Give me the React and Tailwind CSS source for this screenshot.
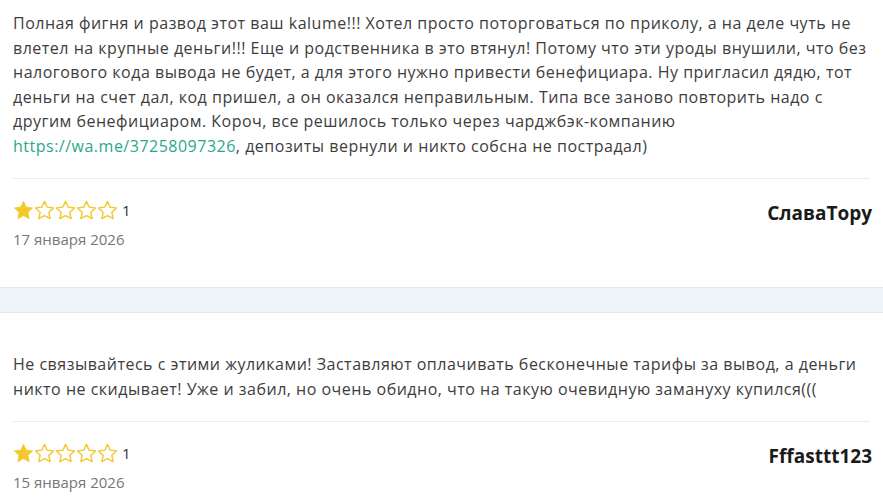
import React from 'react';

function Star({ filled }) {
    return (
        <svg width="21" height="21" viewBox="0 0 24 24" className="shrink-0">
            <path
                d="M12 1.6l3.1 6.6 7.2.9-5.3 5 1.4 7.2L12 17.8l-6.4 3.5 1.4-7.2-5.3-5 7.2-.9z"
                fill={filled ? '#f2c928' : 'none'}
                stroke="#f2c928"
                strokeWidth={filled ? 1 : 1.6}
                strokeLinejoin="round"
            />
        </svg>
    );
}

function Review({ children, rating, date, author, top }) {
    return (
        <div className={`px-[13px] ${top}`}>
            <p className="text-[16px] leading-[24.5px] tracking-[0.5px] text-[#3d3d3d]">{children}</p>
            <div className="mt-[20px] border-t border-[#ebebeb]" />
            <div className="flex justify-between items-start pt-[20px] pb-[37px]">
                <div>
                    <div className="flex items-center">
                        {[1, 2, 3, 4, 5].map((i) => (
                            <Star key={i} filled={i <= rating} />
                        ))}
                        <span className="ml-[4px] text-[15px] text-[#333]">{rating}</span>
                    </div>
                    <div className="mt-[6px] text-[15px] text-[#777]">{date}</div>
                </div>
                <div className="-mr-[2px] text-[19px] font-bold text-[#1a1a1a]">{author}</div>
            </div>
        </div>
    );
}

export default function App() {
    return (
        <div className="w-[883px] h-[497px] overflow-hidden bg-white" style={{ fontFamily: '"Open Sans", "Noto Sans", sans-serif' }}>
            <Review
                top="pt-[11px]"
                rating={1}
                date="17 января 2026"
                author="СлаваТору"
            >
                Полная фигня и развод этот ваш kalume!!! Хотел просто поторговаться по приколу, а на деле чуть не<br />
                влетел на крупные деньги!!! Еще и родственника в это втянул! Потому что эти уроды внушили, что без<br />
                налогового кода вывода не будет, а для этого нужно привести бенефициара. Ну пригласил дядю, тот<br />
                деньги на счет дал, код пришел, а он оказался неправильным. Типа все заново повторить надо с<br />
                другим бенефициаром. Короч, все решилось только через чарджбэк-компанию<br />
                <a href="#" className="text-[#2aa88c]">https://wa.me/37258097326</a>, депозиты вернули и никто собсна не пострадал)
            </Review>
            <div className="h-[26px] bg-[#f0f4fb] border-y border-[#e6e9e6]" />
            <Review
                top="pt-[39px]"
                rating={1}
                date="15 января 2026"
                author="Fffasttt123"
            >
                Не связывайтесь с этими жуликами! Заставляют оплачивать бесконечные тарифы за вывод, а деньги<br />
                никто не скидывает! Уже и забил, но очень обидно, что на такую очевидную замануху купился(((
            </Review>
        </div>
    );
}
